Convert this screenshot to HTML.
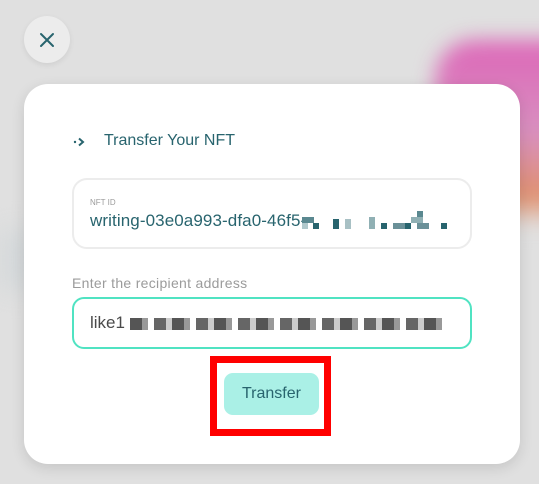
<!DOCTYPE html>
<html><head><meta charset="utf-8"><style>
*{margin:0;padding:0;box-sizing:border-box}
body{width:539px;height:484px;overflow:hidden;background:#e0e0e0;font-family:"Liberation Sans",sans-serif;position:relative}
.blob{position:absolute;left:435px;top:40px;width:160px;height:185px;border-radius:40px;background:linear-gradient(180deg,#dd66b8 0%,#d890c0 50%,#e0906c 85%,#e0e0e0 100%);filter:blur(10px)}
.shade{position:absolute;left:0;top:230px;width:40px;height:60px;background:#d4d8da;filter:blur(12px)}
.close{position:absolute;left:24px;top:16px;width:46px;height:47px;border-radius:50%;background:#ececec;box-shadow:0 2px 6px rgba(0,0,0,.08)}
.card{position:absolute;left:24px;top:84px;width:496px;height:380px;border-radius:24px;background:#fff;box-shadow:0 4px 14px rgba(0,0,0,.12)}
.abs{position:absolute}
.title{left:104px;top:132px;font-size:16px;color:#28646e}
.box1{left:72px;top:178px;width:400px;height:71px;border:2px solid #ececec;border-radius:15px}
.lbl{left:90px;top:198px;font-size:8px;color:#9b9b9b}
.val{left:90px;top:211px;font-size:17px;color:#28646e;letter-spacing:0.1px}
.enter{left:72px;top:275px;font-size:14px;color:#9b9b9b;letter-spacing:0.3px}
.box2{left:72px;top:297px;width:400px;height:52px;border:2px solid #50e3c2;border-radius:12px}
.like{left:90px;top:313px;font-size:17px;color:#4a4a4a}
.red{left:210px;top:356px;width:121px;height:80px;border:7px solid #f00}
.btn{left:224px;top:373px;width:95px;height:42px;border-radius:9px;background:#aaf0e6;color:#28646e;font-size:16px;text-align:center;line-height:42px}
.px{position:absolute;width:6px;height:6px}
</style></head><body>
<div class="blob"></div><div class="shade"></div>
<div class="close"><svg width="46" height="47" viewBox="0 0 46 47"><path d="M17 18L29 30M29 18L17 30" stroke="#28646e" stroke-width="2" stroke-linecap="round"/></svg></div>
<div class="card"></div>
<svg class="abs" style="left:72px;top:134px" width="16" height="16" viewBox="0 0 16 16"><circle cx="3" cy="8" r="1.2" fill="#28646e"/><path d="M7 4.5L11 8L7 11.5" stroke="#28646e" stroke-width="2" fill="none"/></svg>
<div class="abs title">Transfer Your NFT</div>
<div class="abs box1"></div>
<div class="abs lbl">NFT ID</div>
<div class="abs val">writing-03e0a993-dfa0-46f5-</div>
<div class="px" style="left:302px;top:217px;background:#5a8890;width:12px"></div>
<div class="px" style="left:302px;top:223px;background:#b0c8cc"></div>
<div class="px" style="left:313px;top:223px;background:#28646e"></div>
<div class="px" style="left:333px;top:219px;background:#28646e;height:10px"></div>
<div class="px" style="left:345px;top:219px;background:#a8c0c4;height:10px"></div>
<div class="px" style="left:369px;top:217px;background:#90b0b4;height:12px"></div>
<div class="px" style="left:381px;top:223px;background:#28646e"></div>
<div class="px" style="left:393px;top:223px;background:#6a9098;width:12px"></div>
<div class="px" style="left:405px;top:223px;background:#28646e"></div>
<div class="px" style="left:411px;top:217px;background:#90b0b4;width:12px"></div>
<div class="px" style="left:417px;top:211px;background:#5a8890"></div>
<div class="px" style="left:417px;top:223px;background:#6a9098;width:12px"></div>
<div class="px" style="left:441px;top:223px;background:#28646e"></div>
<div class="abs enter">Enter the recipient address</div>
<div class="abs box2"></div>
<div class="abs like">like1</div>
<div class="abs" style="left:130px;top:318px;width:316px;height:12px;background:repeating-linear-gradient(90deg,#555 0 12px,#999 12px 18px,#fff 18px 24px,#666 24px 36px,#ccc 36px 42px)"></div>
<div class="abs red"></div>
<div class="abs btn">Transfer</div>
</body></html>
